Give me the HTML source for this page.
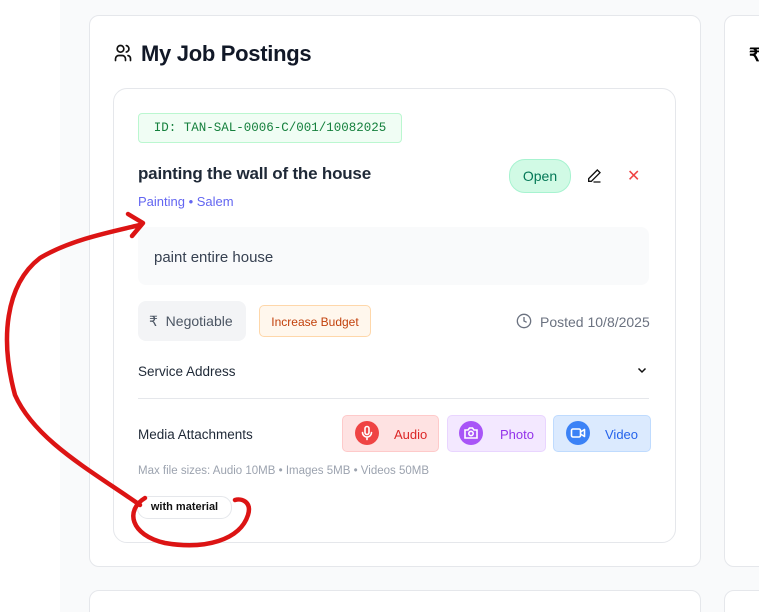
<!DOCTYPE html><html><head><style>
html,body{margin:0;width:759px;height:612px;overflow:hidden}
body{background:#f9fafb;font-family:"Liberation Sans",sans-serif;position:relative}
.left{position:absolute;left:0;top:0;width:60px;height:612px;background:#fff}
.card{position:absolute;background:#fff;border:1px solid #e5e7eb;border-radius:10px}
.a{position:absolute;white-space:nowrap}
</style></head><body>
<div class="left"></div>
<div class="card" style="left:89px;top:15px;width:610px;height:550px"></div>
<div class="card" style="left:724px;top:15px;width:60px;height:550px"></div>
<div class="card" style="left:89px;top:590px;width:610px;height:40px"></div>
<div class="card" style="left:724px;top:590px;width:60px;height:40px"></div>
<div class="a" style="left:749px;top:45px;font-size:18px;font-weight:bold">₹</div>
<svg class="a" style="left:113px;top:43px" width="20" height="20" viewBox="0 0 24 24" fill="none" stroke="#111" stroke-width="2" stroke-linecap="round"><circle cx="9" cy="7" r="4"/><path d="M3 21v-2a4 4 0 0 1 4-4h4a4 4 0 0 1 4 4v2M16 3.1a4 4 0 0 1 0 7.8M21 21v-2a4 4 0 0 0-3-3.9"/></svg>
<div class="a" style="left:141px;top:41px;font-size:22px;font-weight:bold;color:#111827;letter-spacing:-0.3px">My Job Postings</div>
<div class="card" style="left:113px;top:88px;width:561px;height:453px;border-radius:14px"></div>
<div class="a" style="left:138px;top:113px;width:262px;height:28px;background:#f0fdf4;border:1px solid #bbf7d0;border-radius:4px;font-family:'Liberation Mono',monospace;font-size:12.5px;color:#15803d;line-height:28px;text-align:center">ID: TAN-SAL-0006-C/001/10082025</div>
<div class="a" style="left:138px;top:164px;font-size:17px;font-weight:bold;color:#1f2937;letter-spacing:-0.2px">painting the wall of the house</div>
<div class="a" style="left:138px;top:194px;font-size:13px;color:#6366f1">Painting • Salem</div>
<div class="a" style="left:509px;top:159px;width:60px;height:32px;background:#d1fae5;border:1px solid #a7f3d0;border-radius:16px;font-size:14px;color:#047857;line-height:32px;text-align:center">Open</div>
<svg class="a" style="left:586px;top:168px" width="16" height="16" viewBox="0 0 24 24" fill="none" stroke="#111" stroke-width="2" stroke-linecap="round"><path d="M17 3l4 4L8 20H4v-4z M12 21h9"/></svg>
<div class="a" style="left:627px;top:166px;font-size:16px;color:#ef4444">✕</div>
<div class="a" style="left:138px;top:227px;width:511px;height:58px;background:#f9fafb;border-radius:8px"></div>
<div class="a" style="left:154px;top:249px;font-size:15px;color:#374151">paint entire house</div>
<div class="a" style="left:138px;top:301px;width:108px;height:40px;background:#f3f4f6;border-radius:8px;font-size:14px;color:#4b5563;line-height:41px;text-indent:11px">₹&nbsp; Negotiable</div>
<div class="a" style="left:259px;top:305px;width:110px;height:30px;background:#fff7ed;border:1px solid #fed7aa;border-radius:5px;font-size:12px;color:#c2410c;line-height:32px;text-align:center">Increase Budget</div>
<svg class="a" style="left:516px;top:313px" width="16" height="16" viewBox="0 0 24 24" fill="none" stroke="#6b7280" stroke-width="2"><circle cx="12" cy="12" r="10"/><path d="M12 6v6l4 2"/></svg>
<div class="a" style="left:540px;top:314px;font-size:14px;color:#6b7280">Posted 10/8/2025</div>
<div class="a" style="left:138px;top:364px;font-size:13.5px;color:#1f2937">Service Address</div>
<svg class="a" style="left:636px;top:364px" width="12" height="12" viewBox="0 0 24 24" fill="none" stroke="#111" stroke-width="3"><path d="M5 9l7 7 7-7"/></svg>
<div class="a" style="left:138px;top:398px;width:511px;height:1px;background:#e5e7eb"></div>
<div class="a" style="left:138px;top:427px;font-size:13.5px;color:#1f2937">Media Attachments</div>
<div class="a" style="left:342px;top:415px;width:95px;height:35px;background:#fee2e2;border:1px solid #fecaca;border-radius:5px"></div>
<svg class="a" style="left:355px;top:421px" width="24" height="24" viewBox="0 0 24 24"><circle cx="12" cy="12" r="12" fill="#ef4444"/><g fill="none" stroke="#fff" stroke-width="1.6" stroke-linecap="round"><rect x="10" y="5.5" width="4" height="8" rx="2"/><path d="M7.5 11.5a4.5 4.5 0 0 0 9 0M12 16v2.5"/></g></svg>
<div class="a" style="left:394px;top:427px;font-size:13px;color:#dc2626">Audio</div>
<div class="a" style="left:447px;top:415px;width:97px;height:35px;background:#f3e8ff;border:1px solid #e9d5ff;border-radius:5px"></div>
<svg class="a" style="left:459px;top:421px" width="24" height="24" viewBox="0 0 24 24"><circle cx="12" cy="12" r="12" fill="#a855f7"/><g fill="none" stroke="#fff" stroke-width="1.6"><path d="M6 9h3l1.5-2h3L15 9h3v8H6z"/><circle cx="12" cy="12.5" r="2.2"/></g></svg>
<div class="a" style="left:500px;top:427px;font-size:13px;color:#9333ea">Photo</div>
<div class="a" style="left:553px;top:415px;width:96px;height:35px;background:#dbeafe;border:1px solid #bfdbfe;border-radius:5px"></div>
<svg class="a" style="left:566px;top:421px" width="24" height="24" viewBox="0 0 24 24"><circle cx="12" cy="12" r="12" fill="#3b82f6"/><g fill="none" stroke="#fff" stroke-width="1.6" stroke-linejoin="round"><rect x="5.5" y="8" width="9" height="8" rx="1.5"/><path d="M14.5 11l4-2.5v7l-4-2.5"/></g></svg>
<div class="a" style="left:605px;top:427px;font-size:13px;color:#2563eb">Video</div>
<div class="a" style="left:138px;top:465px;font-size:11.5px;color:#9ca3af">Max file sizes: Audio 10MB • Images 5MB • Videos 50MB</div>
<div class="a" style="left:137px;top:496px;width:93px;height:21px;border:1px solid #e5e7eb;border-radius:11px;font-size:11px;font-weight:bold;color:#111;line-height:21px;text-align:center;background:#fff">with material</div>
<svg class="a" style="left:0;top:0" width="759" height="612" fill="none" stroke="#dc1414" stroke-width="4.5" stroke-linecap="round" stroke-linejoin="round">
<path d="M140 225 C110 232 70 240 40 258 C5 285 0 340 15 395 C35 440 90 470 140 505"/>
<path d="M128 214 L143 223 L132 236"/>
<path d="M145 498 C125 510 130 535 165 543 C205 550 240 540 248 515 C252 502 242 498 235 500"/>
</svg>
</body></html>
